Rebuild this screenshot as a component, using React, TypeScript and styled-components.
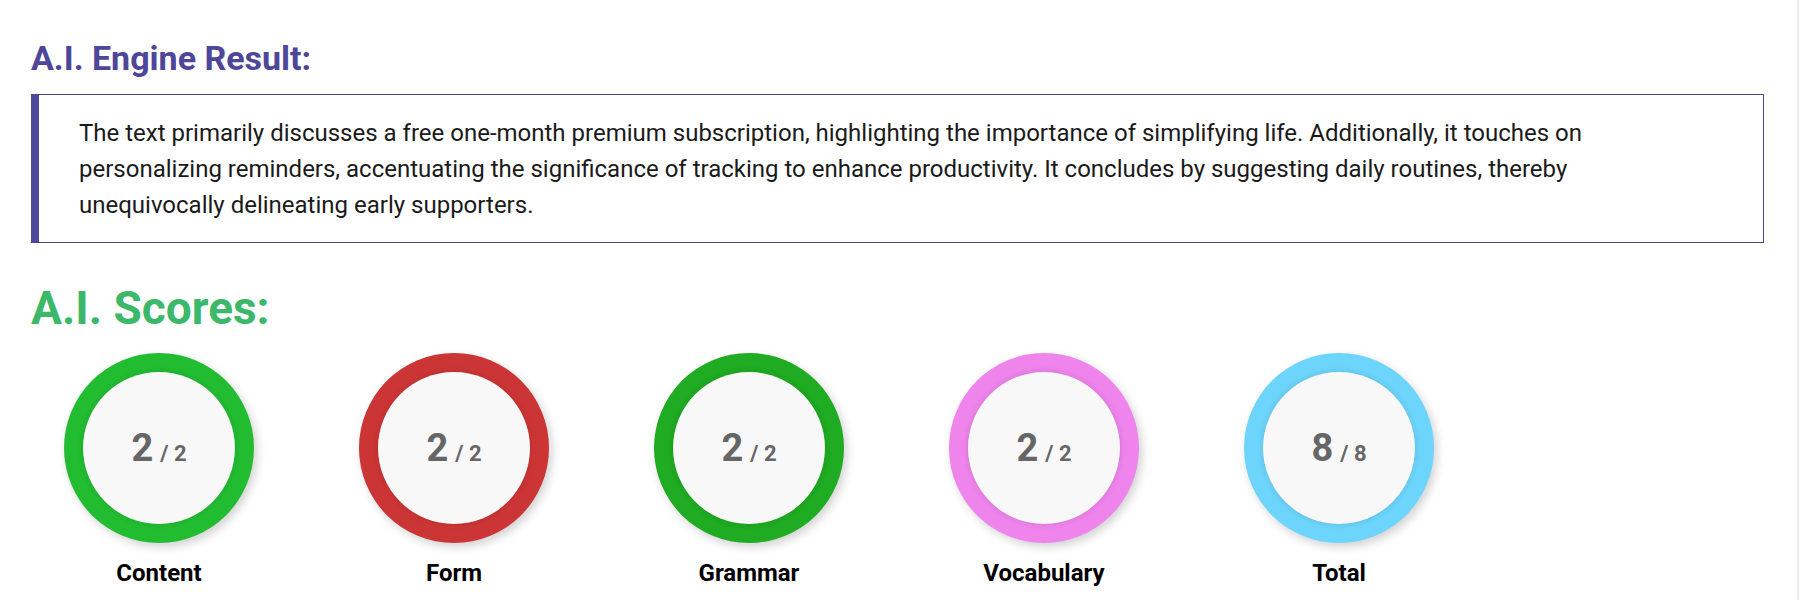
import styled, { createGlobalStyle } from 'styled-components';

const GlobalStyle = createGlobalStyle`
  * {
    box-sizing: border-box;
  }

  body {
    margin: 0;
    background: #ffffff;
    font-family: Roboto, 'Liberation Sans', sans-serif;
  }
`;

interface Score {
  label: string;
  value: number;
  max: number;
  color: string;
}

const scores: Score[] = [
  { label: 'Content', value: 2, max: 2, color: '#22bc31' },
  { label: 'Form', value: 2, max: 2, color: '#cc3535' },
  { label: 'Grammar', value: 2, max: 2, color: '#1fab22' },
  { label: 'Vocabulary', value: 2, max: 2, color: '#ee84ec' },
  { label: 'Total', value: 8, max: 8, color: '#6dd4fb' },
];

const ScoreItem = ({ label, value, max, color }: Score) => (
  <ScoreColumn>
    <Ring $color={color}>
      <RingInner>
        <ScoreText>
          <Value>{value}</Value>
          <Max>/ {max}</Max>
        </ScoreText>
      </RingInner>
    </Ring>
    <ScoreLabel>{label}</ScoreLabel>
  </ScoreColumn>
);

const App = () => {
  return (
    <>
      <GlobalStyle />
      <Page>
        <ResultTitle>A.I. Engine Result:</ResultTitle>
        <ResultBox>
          The text primarily discusses a free one-month premium subscription, highlighting the importance of
          simplifying life. Additionally, it touches on personalizing reminders, accentuating the significance of
          tracking to enhance productivity. It concludes by suggesting daily routines, thereby unequivocally
          delineating early supporters.
        </ResultBox>
        <ScoresTitle>A.I. Scores:</ScoresTitle>
        <ScoresRow>
          {scores.map((s) => (
            <ScoreItem key={s.label} {...s} />
          ))}
        </ScoresRow>
      </Page>
    </>
  );
};

const Page = styled.div`
  display: flex;
  flex-direction: column;
  width: 1799px;
  min-height: 600px;
  padding: 39px 33px 40px 31px;
  border-right: 2px solid #ebebeb;
`;

const ResultTitle = styled.h2`
  margin: 0 0 15px;
  font-size: 34px;
  font-weight: 700;
  line-height: 1.172;
  color: #4d4699;
`;

const ResultBox = styled.div`
  border: 1px solid #4a4488;
  border-left: 8px solid #4f489c;
  padding: 20px 80px 19px 40px;
  font-size: 24px;
  line-height: 36px;
  color: #1a1a1a;
`;

const ScoresTitle = styled.h2`
  margin: 39px 0 17px;
  font-size: 46px;
  font-weight: 700;
  line-height: 1.172;
  color: #3cb86a;
`;

const ScoresRow = styled.div`
  display: flex;
  gap: 105px;
  padding-left: 33px;
`;

const ScoreColumn = styled.div`
  display: flex;
  flex-direction: column;
  align-items: center;
  gap: 16px;
  width: 190px;
`;

const Ring = styled.div<{ $color: string }>`
  width: 190px;
  height: 190px;
  border-radius: 50%;
  background: ${(p) => p.$color};
  padding: 19px;
  box-shadow: 3px 4px 10px rgba(0, 0, 0, 0.18);
`;

const RingInner = styled.div`
  width: 100%;
  height: 100%;
  border-radius: 50%;
  background: #f8f8f8;
  box-shadow: 0 0 6px rgba(0, 0, 0, 0.12);
  display: flex;
  align-items: center;
  justify-content: center;
`;

const ScoreText = styled.div`
  display: flex;
  align-items: baseline;
  gap: 7px;
  color: #666666;
  font-weight: 700;
  line-height: 1.172;
  margin-top: 2px;
`;

const Value = styled.span`
  font-size: 38px;
`;

const Max = styled.span`
  font-size: 22px;
`;

const ScoreLabel = styled.div`
  font-size: 24px;
  font-weight: 700;
  color: #000000;
  line-height: 1.172;
`;

export default App;
